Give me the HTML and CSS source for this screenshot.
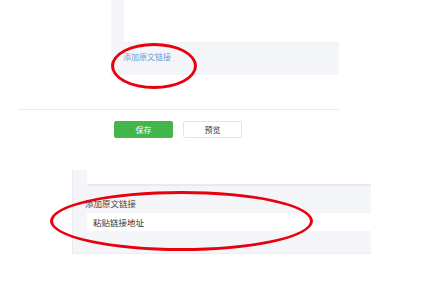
FILE: index.html
```html
<!DOCTYPE html>
<html lang="zh-CN">
<head>
    <meta charset="UTF-8">
    <meta name="viewport" content="width=device-width, initial-scale=1.0">
    <title>原文链接</title>
    <link rel="stylesheet" href="styles.css">
</head>
<body>
    <div class="editor-panel">
        <div class="editor-box"></div>
        <div class="editor-foot"><a class="link" href="#">添加原文链接</a></div>
    </div>

    <div class="divider"></div>

    <div class="actions">
        <button class="btn btn-primary">保存</button>
        <button class="btn btn-default">预览</button>
    </div>

    <div class="link-panel">
        <div class="link-top"></div>
        <div class="link-label">添加原文链接</div>
        <div class="link-input">粘贴链接地址</div>
    </div>

    <div class="mark mark-one"></div>
    <div class="mark mark-two"></div>
</body>
</html>
```

FILE: styles.css
```css
body {
    margin: 0;
    background: #fff;
    font-family: "Noto Sans CJK SC", "Noto Sans", sans-serif;
    color: #333;
    position: relative;
    width: 435px;
    height: 295px;
    overflow: hidden;
}
.editor-panel {
    margin-left: 111px;
    width: 228px;
    background: #f4f5f9;
    padding-left: 13px;
    box-sizing: border-box;
}
.editor-box {
    height: 42px;
    background: #fff;
}
.editor-foot {
    height: 33px;
    padding-top: 9px;
    box-sizing: border-box;
}
.link {
    display: block;
    margin-left: -1px;
    font-size: 8px;
    line-height: 12px;
    color: #6a9fd8;
    text-decoration: none;
}
.divider {
    margin: 34px 0 0 18px;
    width: 321px;
    height: 1px;
    background: #e9eaee;
}
.actions {
    display: flex;
    gap: 10px;
    margin-top: 11px;
    padding-left: 114px;
}
.btn {
    width: 59px;
    height: 17px;
    font-family: inherit;
    font-size: 8px;
    line-height: 15px;
    padding: 0;
    border-radius: 2px;
    box-sizing: border-box;
}
.btn-primary {
    background: #44b549;
    border: 1px solid #44b549;
    color: #fff;
}
.btn-default {
    background: #fff;
    border: 1px solid #e4e6eb;
    color: #333;
}
.link-panel {
    margin: 32px 0 0 72px;
    width: 299px;
    background: #f4f5f9;
    padding-left: 14px;
    box-sizing: border-box;
    border-left: 1px solid #eaebef;
    border-bottom: 1px solid #eceef2;
}
.link-top {
    height: 14px;
    background: #fff;
    border-bottom: 2px solid #e8eaef;
}
.link-label {
    height: 27px;
    padding-top: 11px;
    box-sizing: border-box;
    margin-left: -2px;
    font-size: 8.5px;
    line-height: 12px;
    color: #444;
}
.link-input {
    height: 18px;
    background: #fff;
    padding-left: 6px;
    font-size: 8.5px;
    line-height: 18px;
    color: #333;
    margin-bottom: 22px;
}
.mark {
    position: absolute;
    border: 3px solid #e8000c;
    border-radius: 50%;
    box-sizing: border-box;
}
.mark-one {
    left: 111px;
    top: 43px;
    width: 86px;
    height: 46px;
}
.mark-two {
    left: 50px;
    top: 191px;
    width: 263px;
    height: 60px;
}
```
